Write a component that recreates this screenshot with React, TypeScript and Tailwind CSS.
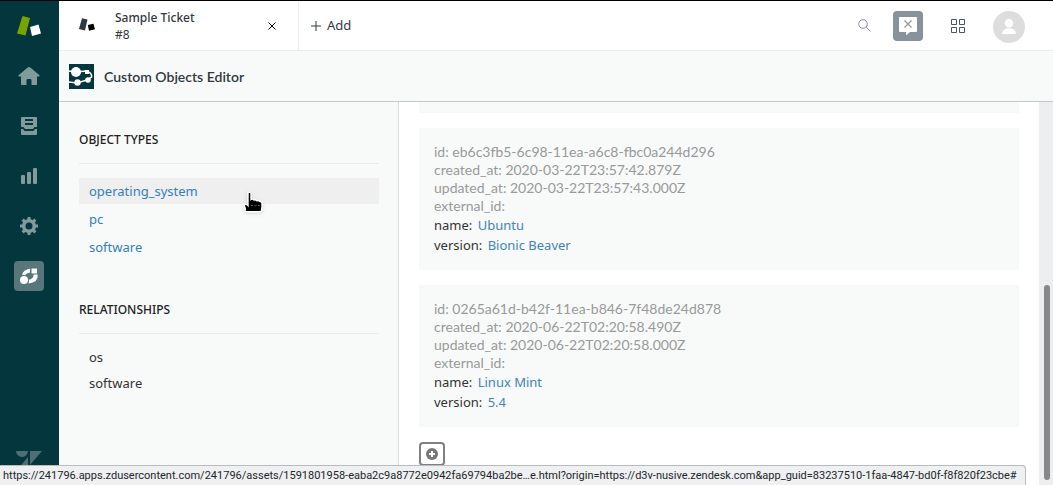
import { ReactNode } from "react";

type CustomObject = {
  id: string;
  created: string;
  updated: string;
  name: string;
  version: string;
};

const objectTypes = ["operating_system", "pc", "software"];
const relationships = ["os", "software"];

const objects: CustomObject[] = [
  {
    id: "eb6c3fb5-6c98-11ea-a6c8-fbc0a244d296",
    created: "2020-03-22T23:57:42.879Z",
    updated: "2020-03-22T23:57:43.000Z",
    name: "Ubuntu",
    version: "Bionic Beaver",
  },
  {
    id: "0265a61d-b42f-11ea-b846-7f48de24d878",
    created: "2020-06-22T02:20:58.490Z",
    updated: "2020-06-22T02:20:58.000Z",
    name: "Linux Mint",
    version: "5.4",
  },
];

const statusUrl =
  "https://241796.apps.zdusercontent.com/241796/assets/1591801958-eaba2c9a8772e0942fa69794ba2be…e.html?origin=https://d3v-nusive.zendesk.com&app_guid=83237510-1faa-4847-bd0f-f8f820f23cbe#";

function NavButton({ label, active, children }: { label: string; active?: boolean; children: ReactNode }) {
  return (
    <button
      aria-label={label}
      className={
        active
          ? "flex size-[30px] items-center justify-center rounded bg-[#57777a] text-white"
          : "flex size-[30px] items-center justify-center text-[#819a9e]"
      }
    >
      {children}
    </button>
  );
}

function Sidebar() {
  return (
    <nav className="flex w-[59px] shrink-0 flex-col items-center gap-5 bg-[#03363d] pt-[10px] pr-px">
      <svg width="30" height="30" viewBox="0 0 30 30" aria-label="Support">
        <path d="M8.5 5L16 7L11.5 24.5L3 22.5Z" fill="#78a300" />
        <path d="M16 16L24.5 13.5L27 22.5L18 25Z" fill="#fff" />
      </svg>
      <NavButton label="Home">
        <svg width="24" height="22" viewBox="0 0 24 22" fill="currentColor">
          <path d="M12 2Q12.7 2 13.3 2.6L22.5 10.3Q23 11.5 21.8 11.6H20V19.2Q20 20 19.2 20H14.5V15.3Q14.5 14 13.2 14H10.8Q9.5 14 9.5 15.3V20H4.8Q4 20 4 19.2V11.6H2.2Q1 11.5 1.5 10.3L10.7 2.6Q11.3 2 12 2Z" />
        </svg>
      </NavButton>
      <NavButton label="Views">
        <svg width="16" height="18" viewBox="0 0 16 18" fill="currentColor">
          <path fillRule="evenodd" d="M1 0H15Q16 0 16 1V10H13.5L12 12H4L2.5 10H0V1Q0 0 1 0ZM4 2V4H12V2ZM4 6V8H12V6Z" />
          <path d="M0 12H2L3.5 14H12.5L14 12H16V17Q16 18 15 18H1Q0 18 0 17Z" />
        </svg>
      </NavButton>
      <NavButton label="Reporting">
        <svg width="16" height="16" viewBox="0 0 16 16" fill="currentColor">
          <rect x="0" y="7" width="4" height="9" rx="1" />
          <rect x="6" y="4" width="4" height="12" rx="1" />
          <rect x="12" y="0" width="4" height="16" rx="1" />
        </svg>
      </NavButton>
      <NavButton label="Admin">
        <svg width="18" height="18" viewBox="0 0 18 18" fill="none" stroke="currentColor">
          <circle cx="9" cy="9" r="5.3" strokeWidth="3.6" />
          <path strokeWidth="3" d="M9 0V3M9 15V18M0 9H3M15 9H18M2.6 2.6L4.6 4.6M13.4 13.4L15.4 15.4M2.6 15.4L4.6 13.4M13.4 4.6L15.4 2.6" />
        </svg>
      </NavButton>
      <NavButton label="Custom Objects" active>
        <svg width="20" height="18" viewBox="0 0 20 18" fill="currentColor">
          <path d="M3 8Q4.3 2.5 11 1.7V5.4Q7.3 5.7 6 8.3Q4.5 7.5 3 8Z" />
          <path d="M18.7 7.5Q19.5 15.5 9.5 16.5Q10.4 14.5 9.6 12.8Q14.5 12 14.7 7.5Z" />
          <circle cx="5" cy="13" r="4" />
          <path d="M12.5 1.5H18V6.5H12.5Z" />
        </svg>
      </NavButton>
      <svg className="mt-auto mb-[8px] shrink-0 text-[#4d7074]" width="26" height="26" viewBox="0 0 26 20" preserveAspectRatio="xMidYMin meet" fill="currentColor" aria-label="Zendesk">
        <path d="M0 0H12A6 6 0 0 1 0 0ZM14 0H26L14 14ZM12 6V20H0ZM14 20A6 6 0 0 1 26 20Z" />
      </svg>
    </nav>
  );
}

function TopBar() {
  return (
    <header className="flex h-[50px] shrink-0 items-center border-b border-[#e9ebed] bg-white text-[#2f3941]">
      <div className="flex h-full w-60 items-center border-r border-[#e9ebed] pl-4 pr-5">
        <svg width="24" height="20" viewBox="0 0 24 20" className="shrink-0">
          <path d="M7 2.2L12.5 3.4L10 14.5L4 13Z" fill="#2f3941" />
          <path d="M12.8 9.1L18.4 7.8L20 13.3L14 14.7Z" fill="#000" />
        </svg>
        <div className="ml-4 text-xs leading-[17px]">
          <div className="font-medium">Sample Ticket</div>
          <div>#8</div>
        </div>
        <button aria-label="Close tab" className="ml-auto flex size-3 items-center justify-center">
          <svg width="8" height="8" viewBox="0 0 8 8" stroke="#000" fill="none">
            <path d="M0.5 0.5L7.5 7.5M7.5 0.5L0.5 7.5" />
          </svg>
        </button>
      </div>
      <button className="flex items-center gap-[6px] pl-3 text-[13px]">
        <svg width="10" height="10" viewBox="0 0 10 10" stroke="currentColor">
          <path d="M5 0V10M0 5H10" />
        </svg>
        Add
      </button>
      <div className="ml-auto flex items-center pr-7">
        <button aria-label="Search" className="mr-[22px]">
          <svg width="13" height="13" viewBox="0 0 13 13" fill="none" stroke="#87929d">
            <circle cx="5" cy="5" r="4.3" />
            <path d="M8.2 8.2L12.5 12.5" />
          </svg>
        </button>
        <button aria-label="Chat" className="mr-7 flex size-[30px] items-center justify-center rounded bg-[#87929d]">
          <svg width="18" height="18" viewBox="0 0 18 18">
            <path d="M1 0H17Q18 0 18 1V14Q18 15 17 15H11L7 18.5V15H1Q0 15 0 14V1Q0 0 1 0Z" fill="#fff" />
            <path d="M5.5 3.5L12.5 10.5M12.5 3.5L5.5 10.5" stroke="#9a9a9a" strokeWidth="1.4" />
          </svg>
        </button>
        <button aria-label="Products" className="mr-7">
          <svg width="14" height="14" viewBox="0 0 14 14" fill="none" stroke="#49545c">
            <path d="M0.5 0.5H5.5V5.5H0.5ZM8.5 0.5H13.5V5.5H8.5ZM0.5 8.5H5.5V13.5H0.5ZM8.5 8.5H13.5V13.5H8.5Z" />
          </svg>
        </button>
        <button aria-label="Profile" className="mt-0.5">
          <svg width="32" height="32" viewBox="0 0 32 32">
            <circle cx="16" cy="16" r="16" fill="#ddd" />
            <circle cx="16" cy="12.2" r="4.2" fill="#fff" />
            <path d="M9 23Q9.5 17.3 16 17.3Q22.5 17.3 23 23Z" fill="#fff" />
          </svg>
        </button>
      </div>
    </header>
  );
}

function AppTitle() {
  return (
    <div className="flex h-[51px] shrink-0 items-center gap-[10px] border-b border-[#c2c8cc] bg-[#f8f9f9] pt-px pl-[10px] text-[#2f3941]">
      <svg width="25" height="25" viewBox="0 0 25 25">
        <path d="M0 0H25V25H0Z" fill="#03363d" />
        <path d="M0 7L7 8L17 7Q23.5 9 22.5 13L18 16L8 19L0 18" fill="none" stroke="#fff" strokeWidth="1.5" />
        <circle cx="7" cy="8" r="5" fill="#fff" />
        <path d="M16 6H20V10H16Z" fill="#fff" />
        <circle cx="8.5" cy="18.5" r="3.2" fill="#fff" />
        <circle cx="19" cy="16" r="2.8" fill="#fff" />
      </svg>
      <h1 className="font-['Lato',sans-serif] text-sm font-semibold">Custom Objects Editor</h1>
    </div>
  );
}

function TypesPanel() {
  return (
    <aside className="w-[340px] shrink-0 border-r border-[#d8dcde] bg-[#f8f9f9] pt-[29px] pr-[19px] pl-5 text-[13px]">
      <h2 className="border-b border-[#e9ebed] pb-[14px] text-xs leading-[18px] font-medium text-[#222]">OBJECT TYPES</h2>
      <ul className="mt-[14px] flex flex-col gap-[2px]">
        {objectTypes.map((type, i) => (
          <li key={type}>
            <a
              href="#"
              className={
                i === 0
                  ? "relative block bg-[#efefef] pl-[10px] leading-[26px] text-[#337fbd]"
                  : "block pl-[10px] leading-[26px] text-[#337fbd]"
              }
            >
              {type}
              {i === 0 && <Pointer />}
            </a>
          </li>
        ))}
      </ul>
      <h2 className="mt-[41px] border-b border-[#e9ebed] pb-[14px] text-xs leading-[18px] font-medium text-[#222]">RELATIONSHIPS</h2>
      <ul className="mt-[10px] text-[#333]">
        {relationships.map((rel) => (
          <li key={rel} className="pl-[10px] leading-[26px]">
            {rel}
          </li>
        ))}
      </ul>
    </aside>
  );
}

// hand cursor hovering the first type
function Pointer() {
  return (
    <svg className="absolute top-3 left-[164px] drop-shadow" width="21" height="24" viewBox="0 0 21 24">
      <path
        d="M5 3Q6.5 1.2 8 3V9.5Q9.5 8.5 11 10Q12.5 9.3 14 10.8Q15.5 10 17 11.5Q19 11.5 19 13.5V17L18.2 21.8H2.2V18L1.5 17V14.5Q3.5 13.5 5 15.5Z"
        fill="#000"
        stroke="#fff"
        strokeWidth="1.4"
      />
      <path d="M8 15Q9 17 10 15M11.5 15Q12.5 17 13.5 15M15 15Q16 17 17 15" stroke="#777" strokeWidth="0.7" fill="none" />
    </svg>
  );
}

function ObjectCard({ item }: { item: CustomObject }) {
  return (
    <article className="bg-[#f8f9f9] p-[15px]">
      <div className="font-['Lato',sans-serif] text-sm leading-[18px] text-[#999]">
        <p>id: {item.id}</p>
        <p>created_at: {item.created}</p>
        <p>updated_at: {item.updated}</p>
        <p>external_id:</p>
      </div>
      <div className="leading-5 text-[#333]">
        <p>
          name: <a href="#" className="ml-[2px] text-[#4183bd]">{item.name}</a>
        </p>
        <p>
          version: <a href="#" className="ml-[2px] text-[#4183bd]">{item.version}</a>
        </p>
      </div>
    </article>
  );
}

export default function App() {
  return (
    <div className="flex h-screen overflow-hidden border-t border-black bg-white font-['Noto_Sans',sans-serif]">
      <Sidebar />
      <div className="flex min-w-0 flex-1 flex-col">
        <TopBar />
        <AppTitle />
        <div className="flex min-h-0 flex-1">
          <TypesPanel />
          <main className="min-w-0 flex-1 overflow-hidden px-5 text-[13px]">
            <div className="h-[11px] bg-[#f8f9f9]" />
            <div className="mt-[15px] flex flex-col gap-[15px]">
              {objects.map((item) => (
                <ObjectCard key={item.id} item={item} />
              ))}
            </div>
            <button
              aria-label="Add object"
              className="mt-[15px] flex h-6 w-[26px] items-center justify-center rounded border-2 border-[#808080]"
            >
              <svg width="12" height="12" viewBox="0 0 12 12">
                <circle cx="6" cy="6" r="6" fill="#777" />
                <path d="M6 3V9M3 6H9" stroke="#fff" strokeWidth="2" />
              </svg>
            </button>
          </main>
          <div className="flex w-[14px] shrink-0 flex-col items-center bg-[#edeeef] pb-[5px] pl-[2px]">
            <div className="mt-auto h-[195px] w-[6px] rounded-full bg-[#87888a]" />
          </div>
        </div>
      </div>
      <div className="fixed bottom-0 left-0 h-5 rounded-tr border-t border-r border-[#b9bbbc] bg-[#eff0f1] pr-2 pl-[3px] font-['Roboto',sans-serif] text-[11px] leading-5 whitespace-nowrap text-[#232629]">
        {statusUrl}
      </div>
    </div>
  );
}
